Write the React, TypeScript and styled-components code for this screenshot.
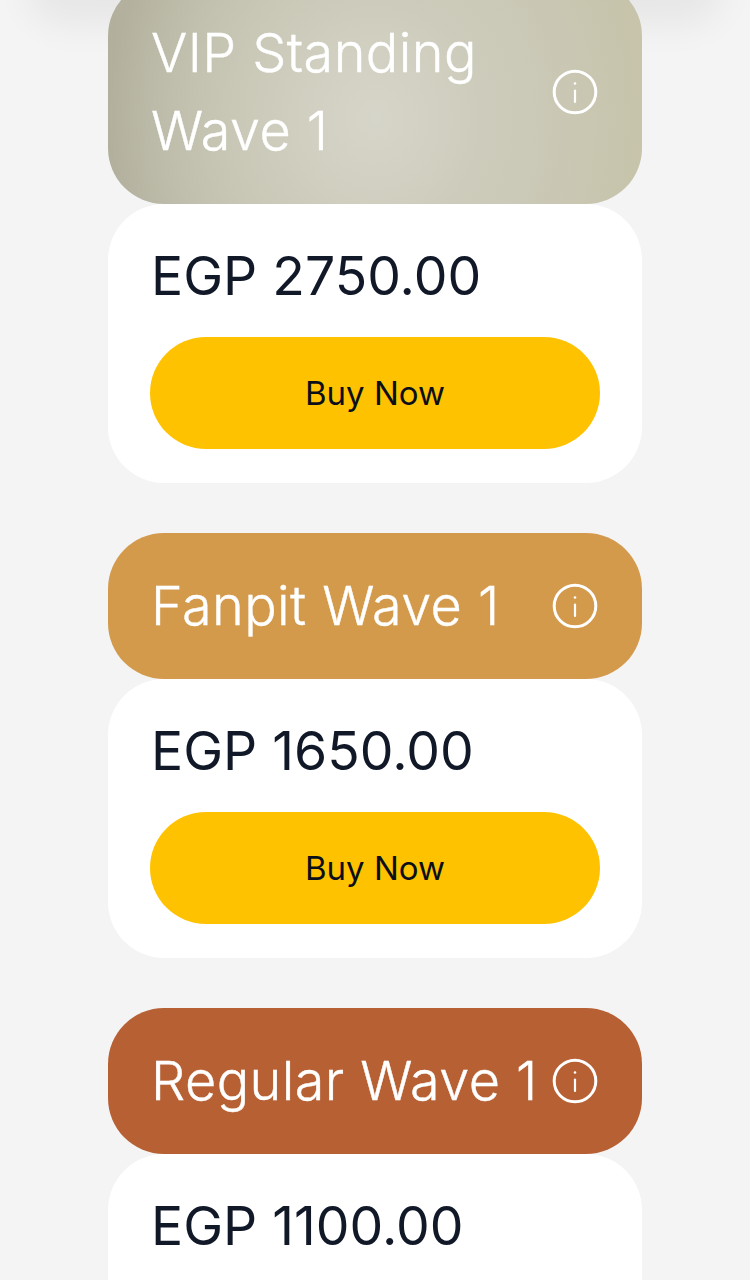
import React from "react";
import styled, { createGlobalStyle } from "styled-components";

const Global = createGlobalStyle`
  html, body { margin: 0; padding: 0; background: #f4f4f5; }
  body { font-family: Inter, "Liberation Sans", sans-serif; overflow: hidden; }
`;

const Page = styled.div`
  position: relative;
  width: 750px;
  height: 1280px;
  overflow: hidden;
  background: #f4f4f5;
`;

const TopShade = styled.div`
  position: absolute;
  top: -40px;
  left: 44px;
  right: 44px;
  height: 40px;
  border-radius: 40px;
  box-shadow: 0 8px 36px 18px rgba(0, 0, 0, 0.055);
`;

const List = styled.div`
  position: relative;
  display: flex;
  flex-direction: column;
  gap: 50px;
  width: 534px;
  margin: -20px auto 0;
`;

const Card = styled.section`
  display: flex;
  flex-direction: column;
`;

const Header = styled.header<{ $bg: string }>`
  display: flex;
  align-items: center;
  gap: 6px;
  box-sizing: border-box;
  padding: 34px 44px 34px 43px;
  border-radius: 56px;
  background: ${(p) => p.$bg};
`;

const Title = styled.h2`
  flex: 1;
  margin: 0;
  font-size: 54px;
  line-height: 78px;
  font-weight: 300;
  color: #fff;
  letter-spacing: 0.4px;
  -webkit-text-stroke: 0.4px #fff;
`;

const Body = styled.div`
  display: flex;
  flex-direction: column;
  box-sizing: border-box;
  height: 279px;
  padding: 36px 42px 0;
  border-radius: 56px;
  background: #fff;
`;

const Price = styled.div`
  padding-left: 1px;
  font-size: 53.5px;
  line-height: 72px;
  font-weight: 400;
  color: #111827;
`;

const Buy = styled.button`
  height: 112px;
  margin-top: 25px;
  border: 0;
  border-radius: 56px;
  background: #ffc200;
  color: #0b0f19;
  font-family: inherit;
  font-size: 33px;
  font-weight: 400;
`;

const Info = () => (
  <svg width="46" height="46" viewBox="0 0 46 46" fill="none" stroke="#fff" strokeLinecap="round" style={{ flexShrink: 0 }}>
    <circle cx="23" cy="23" r="20.8" strokeWidth="3" />
    <path d="M23 21.5V33" strokeWidth="2.2" />
    <circle cx="23" cy="14.5" r="1.3" fill="#fff" stroke="none" />
  </svg>
);

const tickets = [
  {
    name: "VIP Standing Wave 1",
    price: "EGP 2750.00",
    bg: "radial-gradient(ellipse 50% 130% at 50% 62%, #d6d5c9 0%, #cdccbc 40%, rgba(196, 194, 174, 0) 100%), linear-gradient(90deg, #b2b09d 0%, #bdbba7 30%, #c6c3ae 70%, #c7c4ab 100%)",
  },
  { name: "Fanpit Wave 1", price: "EGP 1650.00", bg: "#d39a4c" },
  { name: "Regular Wave 1", price: "EGP 1100.00", bg: "#b66034" },
];

export default function App() {
  return (
    <Page>
      <Global />
      <TopShade />
      <List>
        {tickets.map((t) => (
          <Card key={t.name}>
            <Header $bg={t.bg}>
              <Title>{t.name}</Title>
              <Info />
            </Header>
            <Body>
              <Price>{t.price}</Price>
              <Buy>Buy Now</Buy>
            </Body>
          </Card>
        ))}
      </List>
    </Page>
  );
}
